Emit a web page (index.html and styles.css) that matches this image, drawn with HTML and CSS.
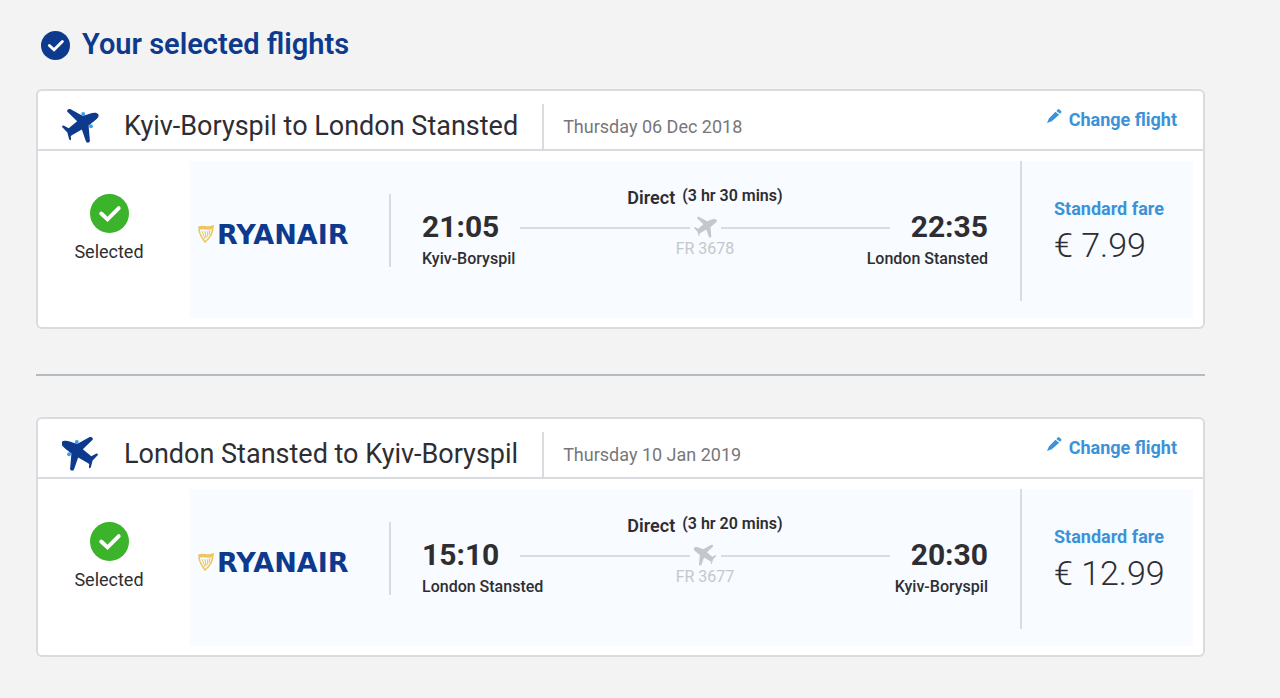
FILE: index.html
```html
<!DOCTYPE html>
<html lang="en">
<head>
<meta charset="utf-8">
<title>Your selected flights</title>
<link rel="stylesheet" href="styles.css">
</head>
<body>
<svg class="defs" aria-hidden="true">
  <symbol id="plane" viewBox="0 0 110 104">
    <path d="M108 19C111 24 106 31 98 37L79 52L83 98C82 104 73 105 71 99L59 64L33 79L26 83L27 93C26 97 23 96 21 92L16 73L1 57C-1 53 2 51 6 53L20 60L45 39L16 11C13 6 20 1 26 4L62 24L82 17C93 13 105 13 108 19Z"/>
  </symbol>
  <symbol id="tick" viewBox="0 0 40 40">
    <circle cx="20" cy="20" r="20"/>
    <path d="M11.500 20L18 26L29.500 14.500" fill="none" stroke="#fff" stroke-width="4" stroke-linecap="round" stroke-linejoin="miter"/>
  </symbol>
  <symbol id="pencil" viewBox="0 0 16 16">
    <path d="M0 15L2 10L9 3L13 6L5 13Z M10 2L12 0Q13 0 15 2Q16 3 15 4L14 5Z"/>
  </symbol>
  <symbol id="harp" viewBox="0 0 16 18">
    <path d="M1 2C5 0 10 4 15 1C15 8 12 13 7 17C4 13 1 9 1 4" fill="none" stroke="#edc65c" stroke-width="1.500"/>
    <path d="M4 6L7 14M7 6L8 13M10 6L9 12M12 5L11 10" fill="none" stroke="#edc65c" stroke-width="1"/>
    <path d="M0 2C5 0 10 4 16 0L14 4C10 6 5 3 1 5Z" fill="#edc65c"/>
  </symbol>
</svg>
<main class="page">
  <h1 class="title"><svg class="title-icon"><use href="#tick"/></svg>Your selected flights</h1>

  <section class="card">
    <header class="card-header">
      <svg class="route-icon" viewBox="0 0 110 104"><g fill="#42a0e8"><circle cx="63" cy="18" r="6"/><circle cx="86" cy="54" r="6"/></g><use href="#plane"/></svg>
      <h2 class="route">Kyiv-Boryspil to London Stansted</h2>
      <time class="date" datetime="2018-12-06">Thursday 06 Dec 2018</time>
      <button class="change" type="button"><svg class="pencil"><use href="#pencil"/></svg>Change flight</button>
    </header>
    <div class="card-body">
      <div class="status"><svg class="status-icon"><use href="#tick"/></svg>Selected</div>
      <div class="panel">
        <div class="airline"><svg class="harp"><use href="#harp"/></svg>RYANAIR</div>
        <div class="flight">
          <div class="summary"><span class="stops">Direct</span><span class="duration">(3 hr 30 mins)</span></div>
          <div class="times"><time>21:05</time><span class="line"></span><svg class="mini"><use href="#plane"/></svg><span class="line"></span><time>22:35</time></div>
          <div class="places"><span class="place">Kyiv-Boryspil</span><span class="number">FR 3678</span><span class="place arrival">London Stansted</span></div>
        </div>
        <div class="fare"><span class="fare-name">Standard fare</span><span class="price">€ 7.99</span></div>
      </div>
    </div>
  </section>

  <hr class="divider">

  <section class="card">
    <header class="card-header">
      <svg class="route-icon" viewBox="0 0 110 104"><g transform="matrix(-1 0 0 1 107 0)"><g fill="#42a0e8"><circle cx="63" cy="18" r="6"/><circle cx="86" cy="54" r="6"/></g><use href="#plane" width="110" height="104"/></g></svg>
      <h2 class="route">London Stansted to Kyiv-Boryspil</h2>
      <time class="date" datetime="2019-01-10">Thursday 10 Jan 2019</time>
      <button class="change" type="button"><svg class="pencil"><use href="#pencil"/></svg>Change flight</button>
    </header>
    <div class="card-body">
      <div class="status"><svg class="status-icon"><use href="#tick"/></svg>Selected</div>
      <div class="panel">
        <div class="airline"><svg class="harp"><use href="#harp"/></svg>RYANAIR</div>
        <div class="flight">
          <div class="summary"><span class="stops">Direct</span><span class="duration">(3 hr 20 mins)</span></div>
          <div class="times"><time>15:10</time><span class="line"></span><svg class="mini" viewBox="0 0 110 104"><g transform="matrix(-1 0 0 1 107 0)"><use href="#plane" width="110" height="104"/></g></svg><span class="line"></span><time>20:30</time></div>
          <div class="places"><span class="place">London Stansted</span><span class="number">FR 3677</span><span class="place arrival">Kyiv-Boryspil</span></div>
        </div>
        <div class="fare"><span class="fare-name">Standard fare</span><span class="price">€ 12.99</span></div>
      </div>
    </div>
  </section>
</main>
</body>
</html>
```
FILE: styles.css
```css
* { box-sizing: border-box; }
body { margin: 0; background: #f3f3f3; color: #2e2e32; font-family: Roboto, "Liberation Sans", sans-serif; }
.defs { display: none; }
.page { padding: 24px 75px 40px 36px; }
.title { display: flex; align-items: center; gap: 12px; margin: 0 0 24px; padding-left: 5px; color: #0d3a8d; font-size: 29px; line-height: 41px; font-weight: 600; }
.title-icon { width: 29px; height: 29px; margin-top: 1px; fill: #0d3a8d; }
.card { background: #fff; border: 2px solid #d8dce1; border-radius: 6px; }
.card-header { display: flex; height: 60px; align-items: flex-end; border-bottom: 2px solid #d8dce1; }
.route-icon { width: 37px; height: 35px; margin: 0 25px 6px 24px; fill: #0d3a8d; }
.route { margin: 0; padding-right: 24px; border-right: 2px solid #d8dce1; font-size: 27px; line-height: 45px; font-weight: 400; white-space: nowrap; }
.date { margin-left: 19px; color: #77777a; font-size: 18px; line-height: 44px; }
.change { display: flex; align-items: center; gap: 7px; align-self: center; margin: 0 26px 0 auto; padding: 0; border: 0; background: none; color: #3c92d8; font: 700 18px/24px Roboto, sans-serif; cursor: pointer; }
.pencil { width: 15px; height: 15px; margin-bottom: 8px; fill: #3c92d8; }
.card-body { display: flex; padding: 10px 10px 9px 0; }
.status { display: flex; flex-direction: column; align-items: center; gap: 7px; width: 152px; padding: 33px 10px 0 0; font-size: 18px; line-height: 24px; }
.status-icon { width: 39px; height: 39px; fill: #3bb32a; }
.panel { display: flex; flex: 1; min-height: 157px; background: #f8fbff; }
.airline { display: flex; align-items: center; gap: 3px; width: 201px; height: 73px; margin-top: 33px; padding: 8px 0 0 8px; border-right: 2px solid #d8dce1; color: #0d3a8d; font: 700 27px/32px "DejaVu Sans", sans-serif; }
.harp { width: 16px; height: 18px; margin-bottom: 2px; }
.flight { flex: 1; padding: 24px 32px 0 31px; }
.summary { display: flex; justify-content: center; gap: 7px; font-weight: 600; }
.stops { font-size: 18px; line-height: 26px; }
.duration { font-size: 16px; line-height: 22px; }
.times { display: flex; align-items: center; font-size: 30px; line-height: 32px; font-weight: 700; }
.line { flex: 1; height: 2px; margin-top: 2px; background: #d8dce1; }
.times time:first-child { margin-right: 21px; }
.times time:last-child { margin-left: 21px; }
.mini { width: 23px; height: 22px; margin: 0 4px; fill: #c4c7cb; }
.places { display: grid; grid-template-columns: 1fr auto 1fr; }
.place { padding-top: 6px; font-size: 16px; line-height: 20px; font-weight: 500; }
.arrival { text-align: right; }
.number { color: #c4c7cb; font-size: 16px; line-height: 12px; }
.fare { display: flex; flex-direction: column; width: 173px; margin-bottom: 17px; padding: 36px 0 0 32px; border-left: 2px solid #d8dce1; }
.fare-name { color: #3c92d8; font-size: 18px; line-height: 24px; font-weight: 700; }
.price { font-size: 34px; line-height: 48px; font-weight: 300; }
.divider { margin: 45px 0 41px; border: 0; border-top: 2px solid #b3bbc1; }
```
